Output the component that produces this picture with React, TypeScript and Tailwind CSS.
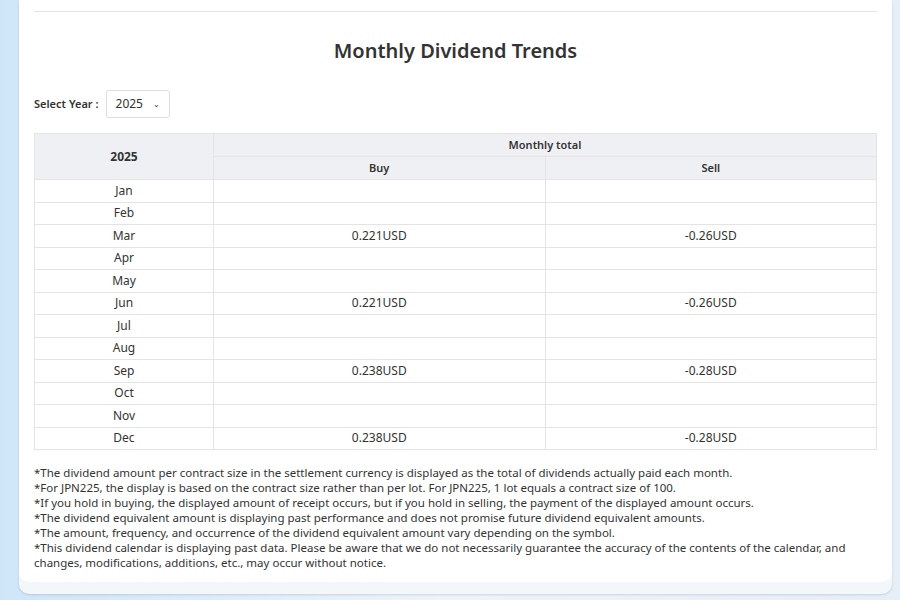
import React from "react";

const rows: [string, string, string][] = [
  ["Jan", "", ""], ["Feb", "", ""], ["Mar", "0.221USD", "-0.26USD"], ["Apr", "", ""],
  ["May", "", ""], ["Jun", "0.221USD", "-0.26USD"], ["Jul", "", ""], ["Aug", "", ""],
  ["Sep", "0.238USD", "-0.28USD"], ["Oct", "", ""], ["Nov", "", ""], ["Dec", "0.238USD", "-0.28USD"],
];

const notes = [
  "*The dividend amount per contract size in the settlement currency is displayed as the total of dividends actually paid each month.",
  "*For JPN225, the display is based on the contract size rather than per lot. For JPN225, 1 lot equals a contract size of 100.",
  "*If you hold in buying, the displayed amount of receipt occurs, but if you hold in selling, the payment of the displayed amount occurs.",
  "*The dividend equivalent amount is displaying past performance and does not promise future dividend equivalent amounts.",
  "*The amount, frequency, and occurrence of the dividend equivalent amount vary depending on the symbol.",
  "*This dividend calendar is displaying past data. Please be aware that we do not necessarily guarantee the accuracy of the contents of the calendar, and changes, modifications, additions, etc., may occur without notice.",
];

export default function App() {
  return (
    <div className="w-[900px] h-[600px] overflow-hidden bg-gradient-to-r from-[#cfe6f9] via-[#eef4fb] to-[#e6eef8] text-[#333] font-['Open_Sans',sans-serif]">
      <div className="ml-[19px] w-[873px] h-[594px] bg-[#f3f6fb] rounded-b-[10px] shadow-sm">
        <div className="h-[582px] bg-white rounded-b-[10px] px-[15px] pt-[11px]">
          <div className="border-t border-[#e2e2e2]" />
          <h2 className="text-center text-[20px] font-semibold mt-[25px] leading-[28px]">Monthly Dividend Trends</h2>
          <div className="flex items-center gap-[7px] mt-[25px]">
            <span className="text-[11px] font-semibold">Select Year :</span>
            <div className="flex items-center gap-[10px] h-[28px] px-[9px] border border-[#ddd] rounded-[3px] text-[12px]">
              2025 <span className="text-[8px]">⌄</span>
            </div>
          </div>
          <table className="w-full mt-[15px] border-collapse text-[12px] table-fixed">
            <colgroup>
              <col className="w-[179px]" /><col /><col />
            </colgroup>
            <thead>
              <tr className="bg-[#eff0f3] h-[23px]">
                <th rowSpan={2} className="border border-[#e4e4e4] font-bold">2025</th>
                <th colSpan={2} className="border border-[#e4e4e4] font-semibold text-[11px]">Monthly total</th>
              </tr>
              <tr className="bg-[#eff0f3] h-[23px]">
                <th className="border border-[#e4e4e4] font-semibold text-[11px]">Buy</th>
                <th className="border border-[#e4e4e4] font-semibold text-[11px]">Sell</th>
              </tr>
            </thead>
            <tbody>
              {rows.map(([m, b, s]) => (
                <tr key={m} className="h-[22.5px] text-center">
                  <td className="border border-[#e4e4e4]">{m}</td>
                  <td className="border border-[#e4e4e4]">{b}</td>
                  <td className="border border-[#e4e4e4]">{s}</td>
                </tr>
              ))}
            </tbody>
          </table>
          <div className="mt-[15px] text-[11.5px] leading-[15px]">
            {notes.map((n) => <p key={n}>{n}</p>)}
          </div>
        </div>
      </div>
    </div>
  );
}
